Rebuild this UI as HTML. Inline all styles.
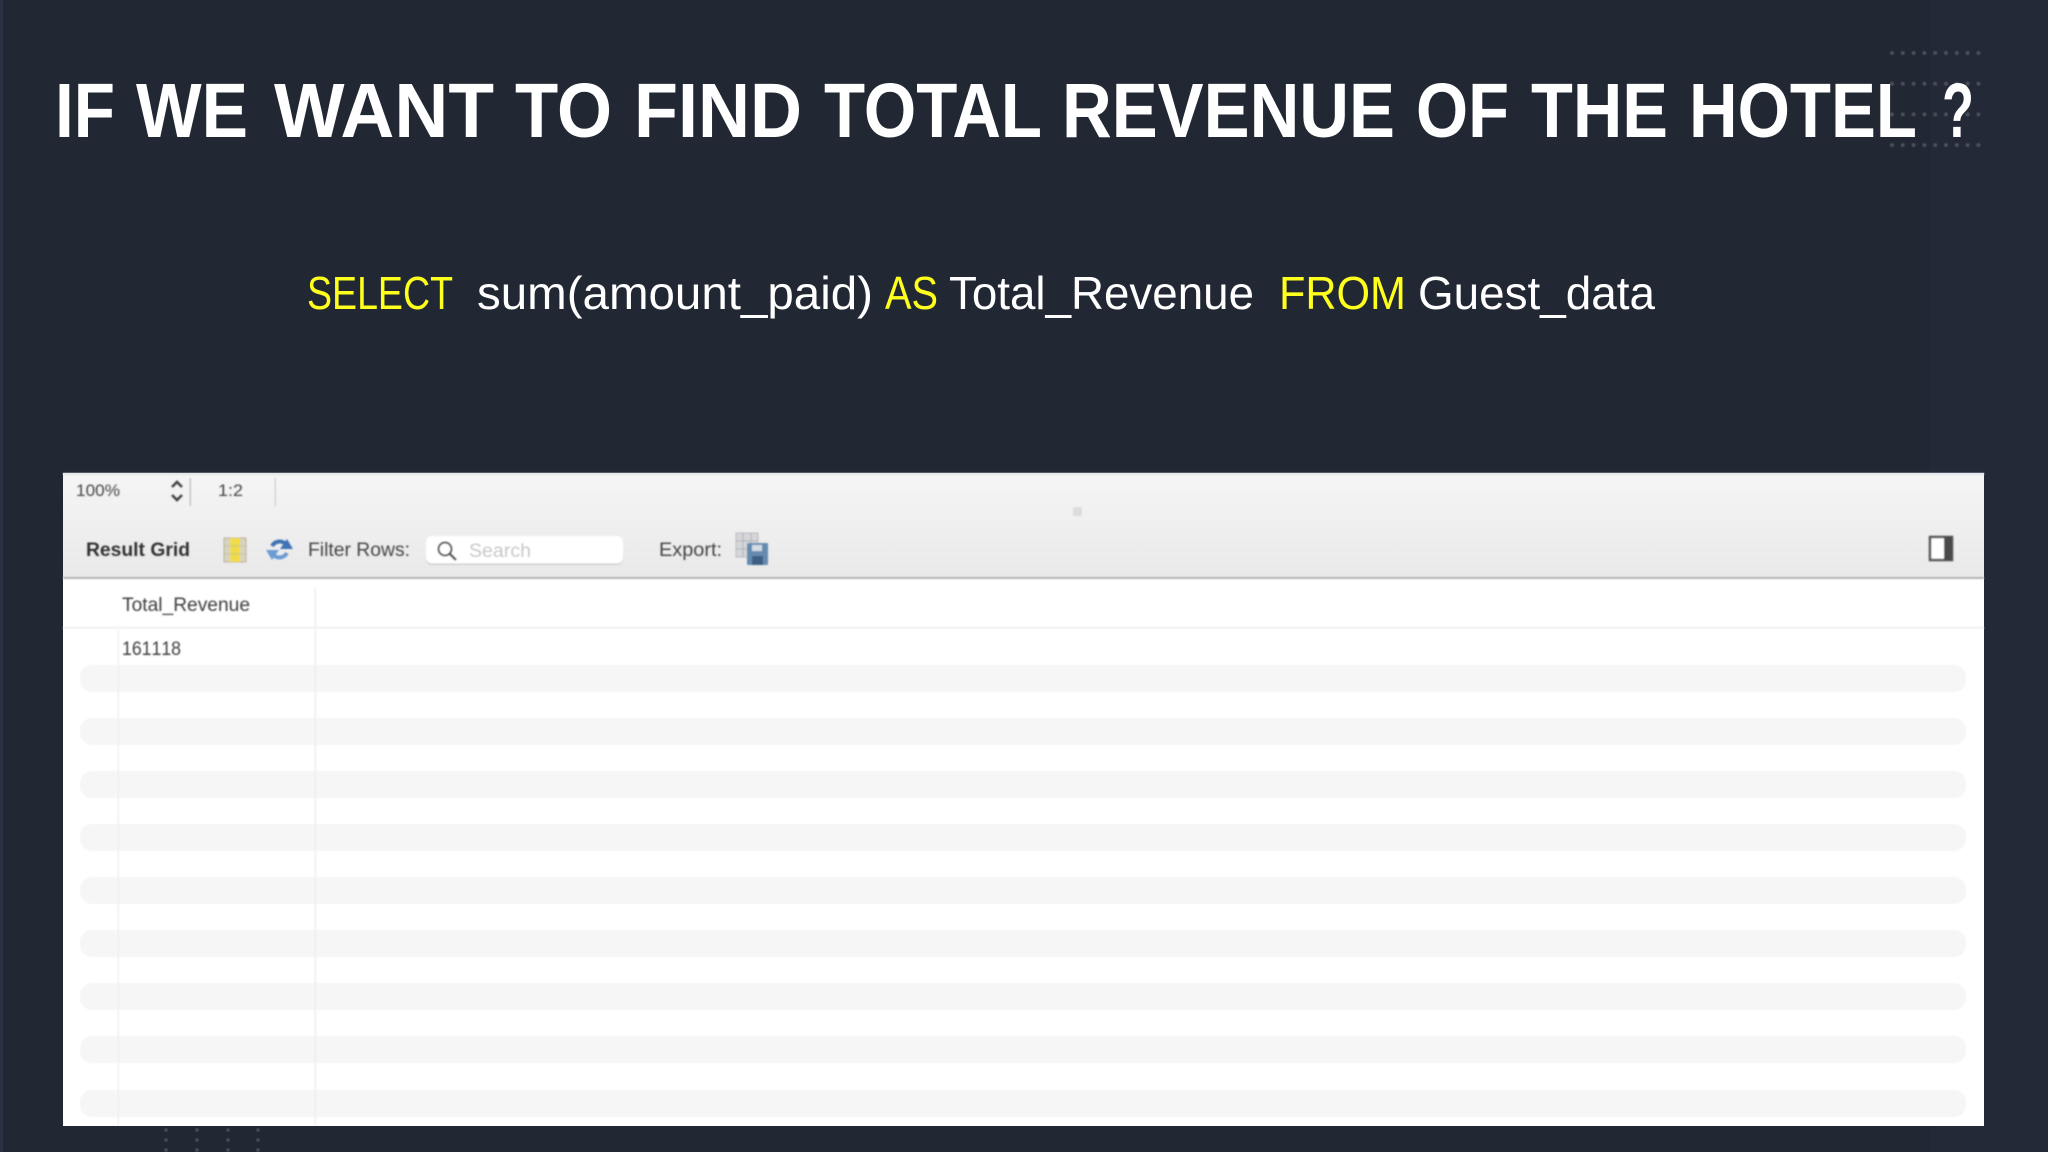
<!DOCTYPE html>
<html>
<head>
<meta charset="utf-8">
<style>
html,body{margin:0;padding:0;width:2048px;height:1152px;overflow:hidden;background:#212733}
svg{display:block}
text{font-family:"Liberation Sans",sans-serif}
</style>
</head>
<body>
<svg width="2048" height="1152" viewBox="0 0 2048 1152" xmlns="http://www.w3.org/2000/svg">
<defs>
<linearGradient id="tb" x1="0" y1="0" x2="0" y2="1"><stop offset="0" stop-color="#f5f5f5"/><stop offset="1" stop-color="#e9e9e9"/></linearGradient>
<filter id="b" x="-5%" y="-5%" width="110%" height="110%"><feGaussianBlur stdDeviation="0.7"/></filter>
<filter id="bd" x="-5%" y="-5%" width="110%" height="110%"><feGaussianBlur stdDeviation="0.6"/></filter>
<pattern id="dots" x="1892" y="53" width="10.8" height="30.7" patternUnits="userSpaceOnUse"><circle cx="0" cy="0" r="2" fill="#4a505b"/><circle cx="10.8" cy="0" r="2" fill="#4a505b"/><circle cx="0" cy="30.7" r="2" fill="#4a505b"/><circle cx="10.8" cy="30.7" r="2" fill="#4a505b"/></pattern>
</defs>
<rect width="2048" height="1152" fill="#212733"/>
<rect x="0" y="0" width="3" height="1152" fill="#2a3140"/>
<rect x="1930" y="0" width="118" height="1152" fill="#232936"/>
<rect x="1888" y="49" width="94" height="100" fill="url(#dots)" filter="url(#bd)"/>
<g fill="#4a505b" filter="url(#bd)">
<circle cx="166" cy="1130" r="1.8"/><circle cx="197" cy="1130" r="1.8"/><circle cx="228" cy="1130" r="1.8"/><circle cx="258" cy="1130" r="1.8"/>
<circle cx="166" cy="1140" r="1.8"/><circle cx="197" cy="1140" r="1.8"/><circle cx="228" cy="1140" r="1.8"/><circle cx="258" cy="1140" r="1.8"/>
<circle cx="166" cy="1150" r="1.8"/><circle cx="197" cy="1150" r="1.8"/><circle cx="228" cy="1150" r="1.8"/><circle cx="258" cy="1150" r="1.8"/>
</g>
<g font-size="77" font-weight="700" fill="#ffffff">
<text x="55" y="137" textLength="60" lengthAdjust="spacingAndGlyphs">IF</text>
<text x="136" y="137" textLength="112" lengthAdjust="spacingAndGlyphs">WE</text>
<text x="274" y="137" textLength="220" lengthAdjust="spacingAndGlyphs">WANT</text>
<text x="515" y="137" textLength="97" lengthAdjust="spacingAndGlyphs">TO</text>
<text x="634" y="137" textLength="168" lengthAdjust="spacingAndGlyphs">FIND</text>
<text x="824" y="137" textLength="218" lengthAdjust="spacingAndGlyphs">TOTAL</text>
<text x="1062" y="137" textLength="333" lengthAdjust="spacingAndGlyphs">REVENUE</text>
<text x="1416" y="137" textLength="93" lengthAdjust="spacingAndGlyphs">OF</text>
<text x="1531" y="137" textLength="137" lengthAdjust="spacingAndGlyphs">THE</text>
<text x="1689" y="137" textLength="228" lengthAdjust="spacingAndGlyphs">HOTEL</text>
<text x="1942" y="137" textLength="32" lengthAdjust="spacingAndGlyphs">?</text>
</g>
<g font-size="46" fill="#ffffff">
<text x="307" y="309" fill="#ffff1e" textLength="146" lengthAdjust="spacingAndGlyphs">SELECT</text>
<text x="477" y="309" textLength="396" lengthAdjust="spacingAndGlyphs">sum(amount_paid)</text>
<text x="885" y="309" fill="#ffff1e" textLength="53" lengthAdjust="spacingAndGlyphs">AS</text>
<text x="949" y="309" textLength="305" lengthAdjust="spacingAndGlyphs">Total_Revenue</text>
<text x="1279" y="309" fill="#ffff1e" textLength="127" lengthAdjust="spacingAndGlyphs">FROM</text>
<text x="1418" y="309" textLength="237" lengthAdjust="spacingAndGlyphs">Guest_data</text>
</g>
<rect x="63" y="473" width="1921" height="653" fill="#ffffff"/>
<rect x="63" y="473" width="1921" height="105" fill="url(#tb)"/>
<g filter="url(#b)">
<rect x="63" y="473" width="1921" height="2" fill="#dfe3ea"/>
<rect x="63" y="577" width="1921" height="2" fill="#b4b4b4"/>
<rect x="63" y="627" width="1921" height="1.5" fill="#ececec"/>
<g fill="#f6f6f6">
<rect x="80" y="665" width="1886" height="27" rx="12"/>
<rect x="80" y="718" width="1886" height="27" rx="12"/>
<rect x="80" y="771" width="1886" height="27" rx="12"/>
<rect x="80" y="824" width="1886" height="27" rx="12"/>
<rect x="80" y="877" width="1886" height="27" rx="12"/>
<rect x="80" y="930" width="1886" height="27" rx="12"/>
<rect x="80" y="983" width="1886" height="27" rx="12"/>
<rect x="80" y="1036" width="1886" height="27" rx="12"/>
<rect x="80" y="1090" width="1886" height="27" rx="12"/>
</g>
<rect x="117.500" y="630" width="1.500" height="495" fill="#f0f0f0"/>
<rect x="314.500" y="588" width="1.500" height="537" fill="#eeeeee"/>
<rect x="189.500" y="478" width="1.500" height="28" fill="#c4c4c4"/>
<rect x="274.500" y="478" width="1.500" height="28" fill="#d4d4d4"/>
<rect x="1073" y="507" width="9" height="9" rx="2" fill="#dcdcdc"/>
<g fill="#333333">
<text x="76" y="496" font-size="17" fill="#444" textLength="44" lengthAdjust="spacingAndGlyphs">100%</text>
<text x="218" y="496" font-size="17" fill="#444" textLength="25" lengthAdjust="spacingAndGlyphs">1:2</text>
<text x="86" y="556" font-size="19" font-weight="700" textLength="104" lengthAdjust="spacingAndGlyphs">Result Grid</text>
<text x="308" y="556" font-size="19" fill="#444" textLength="102" lengthAdjust="spacingAndGlyphs">Filter Rows:</text>
<text x="659" y="556" font-size="19" fill="#444" textLength="63" lengthAdjust="spacingAndGlyphs">Export:</text>
<text x="122" y="611" font-size="19" fill="#3c3c3c" textLength="128" lengthAdjust="spacingAndGlyphs">Total_Revenue</text>
<text x="122" y="655" font-size="19" fill="#3c3c3c" style="font-kerning:none" textLength="59" lengthAdjust="spacingAndGlyphs">161118</text>
</g>
<path d="M172 487l5-5 5 5M172 495l5 5 5-5" fill="none" stroke="#444" stroke-width="2.600"/>
<rect x="224" y="538" width="22" height="24" fill="#d8d3c0" stroke="#b9b29c"/>
<rect x="230" y="538" width="10" height="24" fill="#f0dc48"/>
<path d="M224 546h22M224 554h22" stroke="#c2b98e" stroke-width="0.800"/>
<path d="M272 546c3-5 9-6 14-2" fill="none" stroke="#3f73b5" stroke-width="4"/>
<path d="M280 549h13l-6-10z" fill="#3f73b5"/>
<path d="M287 553c-3 5-9 6-14 2" fill="none" stroke="#6d9cd4" stroke-width="4"/>
<path d="M266 550h13l-7 10z" fill="#6d9cd4"/>
<rect x="426" y="537" width="197" height="28" rx="6" fill="#cfcfcf"/>
<rect x="426" y="536" width="197" height="27.500" rx="6" fill="#ffffff"/>
<circle cx="445" cy="549" r="6.500" fill="none" stroke="#444" stroke-width="2"/>
<path d="M450 554l6 6" stroke="#444" stroke-width="2.400"/>
<text x="469" y="557" font-size="19" fill="#c4c4c4" textLength="62" lengthAdjust="spacingAndGlyphs">Search</text>
<rect x="736" y="533" width="22" height="24" fill="#d4d6da" stroke="#bcbec2"/>
<path d="M736 541h22M736 549h22M743 533v24M751 533v24" stroke="#aeb1b6" stroke-width="1"/>
<rect x="747" y="543" width="21" height="22" rx="1" fill="#668bb0"/>
<rect x="752" y="545" width="10" height="6" fill="#d4dde6"/>
<rect x="752" y="556" width="11" height="9" fill="#3d5f82"/>
<rect x="1930" y="537" width="22" height="23" fill="#ffffff" stroke="#555" stroke-width="2.500"/>
<rect x="1944" y="537" width="8" height="23" fill="#4a4a4a"/>
</g>
</svg>
</body>
</html>
